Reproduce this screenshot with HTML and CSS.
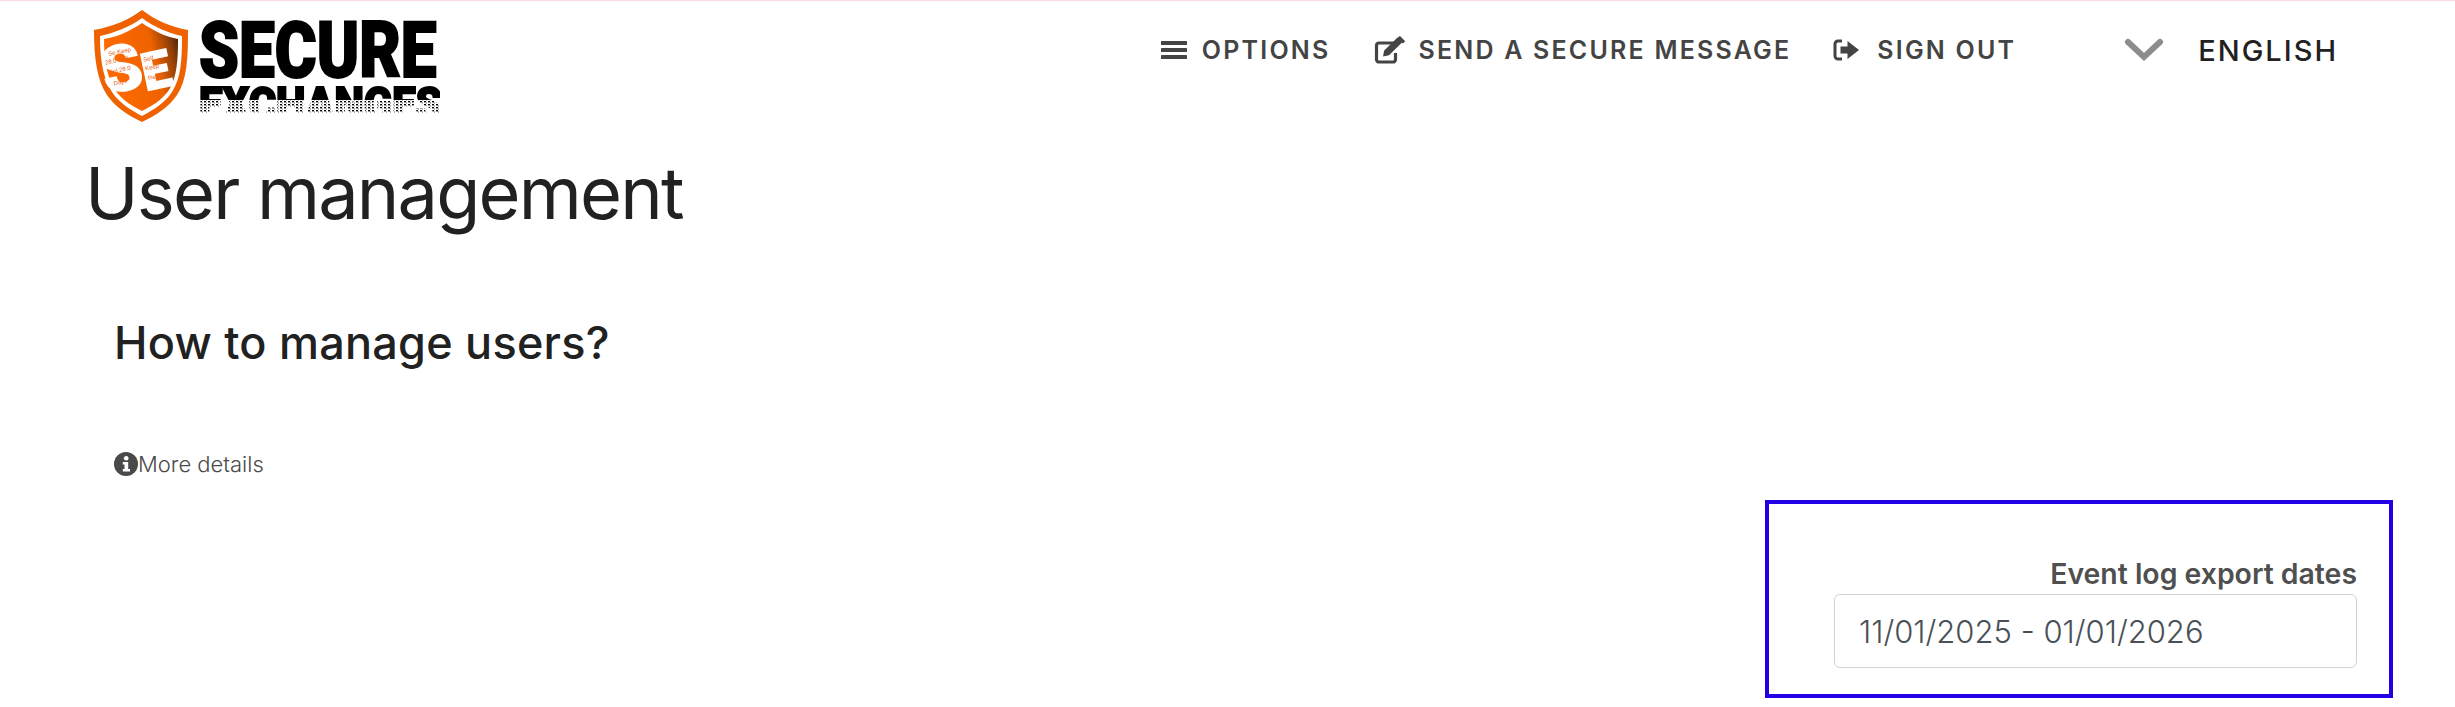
FILE: index.html
```html
<!DOCTYPE html>
<html lang="en">
<head>
    <meta charset="UTF-8">
    <meta name="viewport" content="width=device-width, initial-scale=1.0">
    <title>User management - Secure Exchanges</title>
    <link rel="stylesheet" href="styles.css">
</head>
<body>
    <header class="top-bar">
        <a class="logo" href="#">
            <svg class="logo-img" viewBox="0 -7 348 134" width="348" height="134" aria-label="Secure Exchanges">
                <defs>
                    <linearGradient id="shieldFill" x1="0" y1="0.3" x2="1" y2="0">
                        <stop offset="0" stop-color="#ff6a00"/>
                        <stop offset="0.6" stop-color="#ee6200"/>
                        <stop offset="0.85" stop-color="#8a3c08"/>
                        <stop offset="1" stop-color="#2e1a12"/>
                    </linearGradient>
                    <pattern id="dither" width="4" height="3" patternUnits="userSpaceOnUse">
                        <rect width="2" height="1.4" fill="#fff"/>
                        <rect x="2" y="1.5" width="1" height="1" fill="#999"/>
                    </pattern>
                    <mask id="exchMask" maskUnits="userSpaceOnUse" x="100" y="76" width="248" height="40">
                        <rect x="100" y="76" width="248" height="16" fill="#fff"/>
                        <rect x="100" y="92" width="248" height="13" fill="url(#dither)"/>
                    </mask>
                </defs>
                <path d="M50 2C63 12 79 19 96 22C96 50 95 72 85 87C77 99 63 108 50 114C37 108 23 99 15 87C5 72 2 50 2 22C19 19 37 12 50 2Z" fill="#ee6200"/>
                <path d="M50 10C62 19 76 25 90 28C90 52 89 70 80 84C73 95 61 102 50 108C39 102 27 95 20 84C11 70 8 52 8 28C22 25 38 19 50 10Z" fill="#fff"/>
                <path d="M50 15C62 23 74 29 86 31C86 52 85 69 77 82C70 92 60 98 50 103C40 98 30 92 23 82C15 69 12 52 12 31C26 29 38 23 50 15Z" fill="url(#shieldFill)"/>
                <g transform="rotate(-12 46 56)">
                    <text x="9" y="79" class="logo-se-big" textLength="40" lengthAdjust="spacingAndGlyphs">S</text>
                    <text x="48" y="84" class="logo-se-mid" textLength="29" lengthAdjust="spacingAndGlyphs">E</text>
                    <text x="19" y="42" class="logo-se-tiny">Se Keep</text>
                    <text x="14" y="50" class="logo-se-tiny">28.0 Self</text>
                    <text x="16" y="60" class="logo-se-tiny">Sel 28.0</text>
                    <text x="18" y="72" class="logo-se-tiny">Days</text>
                    <text x="52" y="55" class="logo-se-tiny">Self</text>
                    <text x="52" y="64" class="logo-se-tiny">Keep</text>
                    <text x="53" y="74" class="logo-se-tiny">Ready</text>
                </g>
                <text class="logo-word" transform="translate(107 69) scale(0.83 1)">SECURE</text>
                <g mask="url(#exchMask)">
                    <text class="logo-word-small" transform="translate(107 112) scale(0.91 1)">EXCHANGES</text>
                </g>
            </svg>
        </a>
        <nav class="main-nav">
            <a class="nav-link nav-options" href="#">
                <svg class="nav-icon" viewBox="0 0 26 20" width="26" height="20"><rect y="1" width="26" height="4" rx="0.5"/><rect y="8" width="26" height="4" rx="0.5"/><rect y="15" width="26" height="4" rx="0.5"/></svg>
                OPTIONS
            </a>
            <a class="nav-link nav-send" href="#">
                <svg class="nav-icon" viewBox="0 0 32 28" width="32" height="28"><path d="M20 7H5a2.5 2.5 0 0 0-2.5 2.5v14A2.5 2.5 0 0 0 5 26h14a2.5 2.5 0 0 0 2.500-2.500V17" fill="none" stroke="#444" stroke-width="3.200"/><path d="M9 20.500l1.200-6L23.500 1.500l4.800 4.800L15 19.300zM25 0.500l1-0.500 5 5-0.500 1-1.500 1.500-5.500-5.500z"/></svg>
                SEND A SECURE MESSAGE
            </a>
            <a class="nav-link nav-signout" href="#">
                <svg class="nav-icon" viewBox="0 0 26 22" width="26" height="22"><path d="M9 2H5a3 3 0 0 0-3 3v12a3 3 0 0 0 3 3h4" fill="none" stroke="#444" stroke-width="3"/><path d="M7.500 7.500h7V2L26 11 14.500 20v-5.500h-7z"/></svg>
                SIGN OUT
            </a>
            <div class="lang-select">
                <svg class="lang-chevron" viewBox="0 0 40 24" width="40" height="24"><path d="M4 4l16 15L36 4" fill="none" stroke="#8c8c8c" stroke-width="6" stroke-linecap="round" stroke-linejoin="miter"/></svg>
                <span class="lang-name">ENGLISH</span>
            </div>
        </nav>
    </header>

    <main class="page">
        <h1>User management</h1>
        <section class="help-block">
            <h2>How to manage users?</h2>
            <a class="more-link" href="#">
                <svg class="info-icon" viewBox="0 0 24 24" width="24" height="24"><circle cx="12" cy="12" r="12" fill="#4a4a4a"/><circle cx="12.200" cy="6.300" r="2.300" fill="#fff"/><path d="M8.800 10h5.400v7h1.800v2.500H8.800V17h1.700v-4.500H8.800z" fill="#fff"/></svg>More details
            </a>
        </section>
        <div class="export-row">
            <div class="export-box">
                <label class="export-label" for="exportDates">Event log export dates</label>
                <input class="export-input" id="exportDates" type="text" value="11/01/2025 - 01/01/2026">
            </div>
        </div>
    </main>
</body>
</html>
```

FILE: styles.css
```css
* {
    box-sizing: border-box;
}
html, body {
    height: 100%;
}
body {
    margin: 0;
    border-top: 1px solid #fbd9e8;
    background: #fff;
    color: #212121;
    font-family: Inter, "Noto Sans", sans-serif;
    overflow: hidden;
}
a {
    color: inherit;
    text-decoration: none;
}

/* top bar */
.top-bar {
    display: flex;
    justify-content: space-between;
    padding: 0 117px 0 92px;
    height: 147px;
}
.logo-img {
    display: block;
}
.logo-word {
    font-family: Roboto, sans-serif;
    font-weight: 900;
    font-size: 77px;
    fill: #000;
    stroke: #000;
    stroke-width: 2px;
}
.logo-word-small {
    font-family: Roboto, sans-serif;
    font-weight: 900;
    font-size: 46px;
    fill: #000;
    stroke: #000;
    stroke-width: 2px;
}
.logo-se-big {
    font-family: Roboto, sans-serif;
    font-weight: 900;
    font-size: 64px;
    fill: #fff;
    stroke: #fff;
    stroke-width: 1.500px;
}
.logo-se-mid {
    font-family: Roboto, sans-serif;
    font-weight: 900;
    font-size: 52px;
    fill: #fff;
    stroke: #fff;
    stroke-width: 1.500px;
}
.logo-se-tiny {
    font-family: "Liberation Sans", sans-serif;
    font-size: 6px;
    fill: #e8641a;
}
.main-nav {
    display: flex;
    align-items: center;
    height: 98px;
    color: #444;
    font-size: 25px;
    font-weight: 600;
    letter-spacing: 2.200px;
}
.nav-link {
    display: flex;
    align-items: center;
    margin-right: 44px;
    white-space: nowrap;
}
.nav-icon {
    fill: #444;
    flex: none;
}
.nav-options .nav-icon {
    margin-right: 15px;
}
.nav-send {
    margin-right: 42px;
}
.nav-send .nav-icon {
    margin-right: 12px;
}
.nav-signout .nav-icon {
    margin-right: 18px;
}
.lang-select {
    display: flex;
    align-items: center;
    margin-left: 64px;
    color: #212121;
    font-size: 29px;
    font-weight: 500;
    letter-spacing: 2px;
}
.lang-chevron {
    margin-right: 34px;
}

/* main content */
.page {
    padding: 0 62px 0 85px;
}
h1 {
    margin: 0;
    font-size: 72px;
    font-weight: 400;
    line-height: 90px;
    letter-spacing: -1.800px;
}
.help-block {
    padding-left: 29px;
}
h2 {
    margin: 75px 0 0;
    font-size: 45px;
    font-weight: 500;
    line-height: 60px;
    letter-spacing: 0.240px;
}
.more-link {
    display: flex;
    align-items: center;
    margin-top: 78px;
    color: #4a4a4a;
    font-size: 22px;
    font-weight: 300;
}
.export-row {
    display: flex;
    justify-content: flex-end;
    margin-top: 23px;
}
.export-box {
    display: flex;
    flex-direction: column;
    width: 628px;
    height: 198px;
    padding: 52px 32px 0 65px;
    border: 4px solid #2200e6;
}
.export-label {
    margin-bottom: 3px;
    color: #4f4f4f;
    font-size: 28.400px;
    font-weight: 600;
    text-align: right;
}
.export-input {
    width: 100%;
    height: 74px;
    padding: 0 24px;
    border: 1px solid #ced4da;
    border-radius: 6px;
    background: #fff;
    color: #495057;
    font-family: inherit;
    font-size: 31px;
    font-weight: 300;
}
```
